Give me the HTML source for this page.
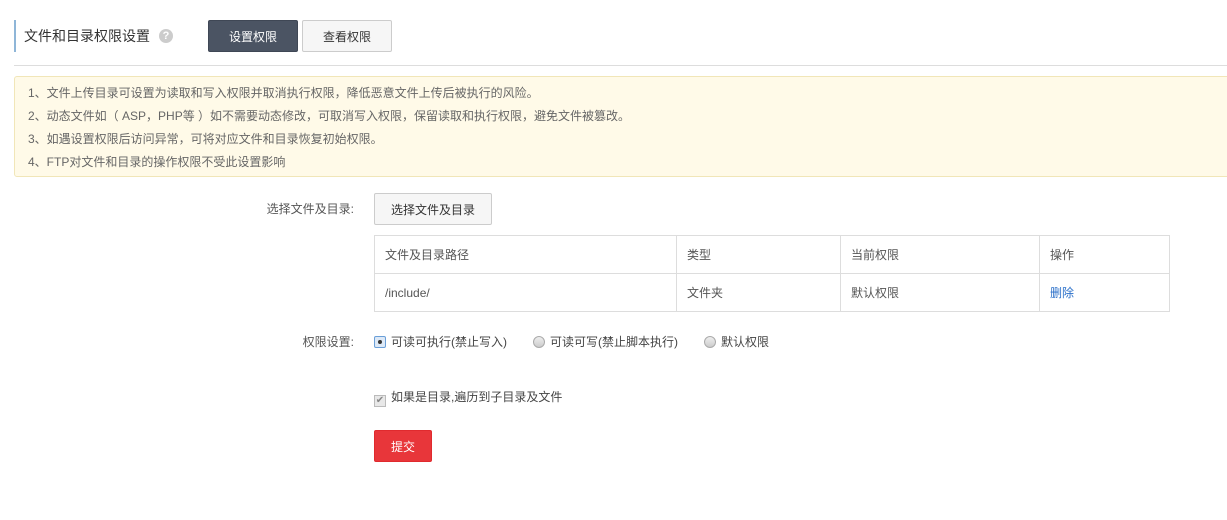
<!DOCTYPE html>
<html><head><meta charset="utf-8"><style>
*{margin:0;padding:0;box-sizing:border-box}
body{width:1227px;height:520px;background:#fff;font-family:"Liberation Sans","Noto Sans CJK SC",sans-serif;color:#333;position:relative;overflow:hidden;font-size:12px}
.a{position:absolute;white-space:nowrap}
.btn{position:absolute;border:1px solid #ccc;border-radius:2px;background:#f6f6f6;color:#333;font-size:12px;display:flex;align-items:center;justify-content:center}
table{position:absolute;left:374px;top:235px;width:796px;border-collapse:collapse;font-size:12px;color:#555}
td{border:1px solid #ddd;height:38px;padding-left:10px}
.radio{display:inline-block;width:12px;height:12px;border-radius:50%;border:1px solid #aaa;background:linear-gradient(#eee,#ccc);vertical-align:-2px;margin-right:5px;position:relative}
</style></head><body>
<div class="a" style="left:14px;top:20px;width:2px;height:32px;background:#8fb6d8"></div>
<div class="a" style="left:24px;top:26px;font-size:14px;color:#333">文件和目录权限设置</div>
<div class="a" style="left:159px;top:29px;width:14px;height:14px;border-radius:50%;background:#ccc;color:#fff;font-size:11px;font-weight:bold;text-align:center;line-height:14px">?</div>
<div class="btn" style="left:208px;top:20px;width:90px;height:32px;background:#4b5463;border-color:#3f4755;color:#fff">设置权限</div>
<div class="btn" style="left:302px;top:20px;width:90px;height:32px">查看权限</div>
<div class="a" style="left:14px;top:65px;width:1213px;height:1px;background:#ddd"></div>
<div class="a" style="left:14px;top:76px;width:1220px;height:101px;background:#fffae8;border:1px solid #f1e6b8;border-radius:3px;color:#666;font-size:12px;line-height:23px;padding:5px 0 0 13px">
1、文件上传目录可设置为读取和写入权限并取消执行权限，降低恶意文件上传后被执行的风险。<br>
2、动态文件如（ ASP，PHP等 ）如不需要动态修改，可取消写入权限，保留读取和执行权限，避免文件被篡改。<br>
3、如遇设置权限后访问异常，可将对应文件和目录恢复初始权限。<br>
4、FTP对文件和目录的操作权限不受此设置影响</div>
<div class="a" style="left:200px;width:154px;text-align:right;top:200px;font-size:12px;color:#555">选择文件及目录:</div>
<div class="btn" style="left:374px;top:193px;width:118px;height:32px">选择文件及目录</div>
<table><tr><td style="width:302px">文件及目录路径</td><td style="width:164px">类型</td><td style="width:199px">当前权限</td><td>操作</td></tr>
<tr><td>/include/</td><td>文件夹</td><td>默认权限</td><td style="color:#2a6fc9">删除</td></tr></table>
<div class="a" style="left:200px;width:154px;text-align:right;top:333px;font-size:12px;color:#555">权限设置:</div>
<div class="a" style="left:374px;top:333px;font-size:12px;color:#444"><span class="radio" style="border-color:#6a9fd8;border-radius:2px;background:#dde9f7"><span style="position:absolute;left:3px;top:3px;width:4px;height:4px;border-radius:50%;background:#333"></span></span>可读可执行(禁止写入)<span style="display:inline-block;width:26px"></span><span class="radio"></span>可读可写(禁止脚本执行)<span style="display:inline-block;width:26px"></span><span class="radio"></span>默认权限</div>
<div class="a" style="left:374px;top:388px;font-size:12px;color:#444"><span style="display:inline-block;width:12px;height:12px;border:1px solid #bbb;background:#e8e8e8;vertical-align:-2px;margin-right:5px;font-size:10px;line-height:10px;text-align:center;color:#888">✔</span>如果是目录,遍历到子目录及文件</div>
<div class="btn" style="left:374px;top:430px;width:58px;height:32px;background:#e8363a;border-color:#e02a2e;color:#fff">提交</div>
</body></html>
